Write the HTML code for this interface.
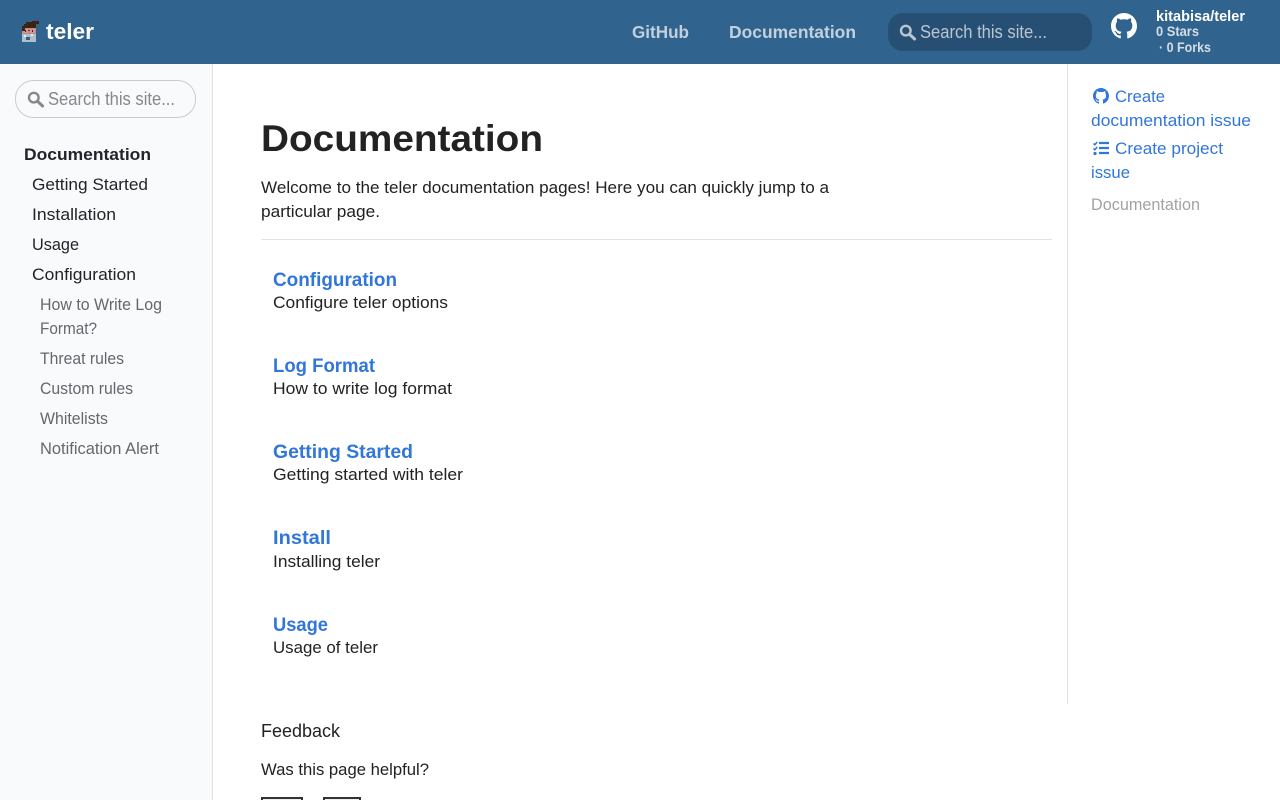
<!DOCTYPE html>
<html lang="en">
<head>
<meta charset="utf-8">
<title>Documentation | teler</title>
<style>
html,body{margin:0;padding:0;width:1280px;height:800px;overflow:hidden;background:#fff}
svg{display:block}
text{font-family:"Liberation Sans",Arial,sans-serif;font-size:16.5px;fill:#222}
.b{font-weight:700}
.nav{font-size:17.5px;font-weight:700;fill:#c3d0dd}
.sb{fill:#212529}
.li{fill:#64686d}
.lk{fill:#3176d9}
.h{font-size:19px;font-weight:700;fill:#3176d9}
</style>
</head>
<body>
<svg width="1280" height="800" viewBox="0 0 1280 800" xmlns="http://www.w3.org/2000/svg">
  <!-- panels -->
  <rect width="1280" height="800" fill="#fff"/>
  <rect x="0" y="64" width="212" height="736" fill="#f9fafc"/>
  <rect x="212" y="64" width="1" height="736" fill="#dee2e6"/>
  <rect x="1067" y="64" width="1" height="640" fill="#dee2e6"/>
  <rect width="1280" height="64" fill="#30638e"/>

  <!-- logo -->
  <g shape-rendering="crispEdges">
    <rect x="22" y="33" width="14" height="9" fill="#a6c2d6"/>
    <rect x="24" y="35" width="2" height="2" fill="#e7edf2"/>
    <rect x="31" y="34" width="2" height="2" fill="#e7edf2"/>
    <rect x="26" y="37" width="4" height="3" fill="#4f5a66"/>
    <rect x="32" y="38" width="2" height="2" fill="#d9b38c"/>
    <rect x="22" y="28" width="14" height="6" fill="#b98f7e"/>
    <rect x="23" y="29" width="5" height="4" fill="#dc8f9f"/>
    <rect x="30" y="29" width="5" height="4" fill="#dc8f9f"/>
    <rect x="25" y="30" width="1" height="2" fill="#2e2e2e"/>
    <rect x="32" y="30" width="1" height="2" fill="#2e2e2e"/>
    <rect x="28" y="30" width="2" height="1" fill="#6b4a3c"/>
    <rect x="24" y="24" width="12" height="4" fill="#3d2314"/>
    <rect x="22" y="26" width="3" height="5" fill="#3d2314"/>
    <rect x="26" y="22" width="10" height="2" fill="#3d2314"/>
    <rect x="32" y="21" width="7" height="3" fill="#3d2314"/>
  </g>
  <text x="46" y="39" class="b" style="font-size:22px;fill:#fff" textLength="48" lengthAdjust="spacingAndGlyphs">teler</text>

  <!-- top nav -->
  <text x="632" y="38" class="nav" textLength="57" lengthAdjust="spacingAndGlyphs">GitHub</text>
  <text x="729" y="38" class="nav" textLength="127" lengthAdjust="spacingAndGlyphs">Documentation</text>

  <!-- top search -->
  <rect x="888" y="13" width="204" height="38" rx="15" fill="#264f73"/>
  <g fill="none" stroke="#b9c6d2">
    <circle cx="905.8" cy="30.6" r="4.8" stroke-width="2.4"/>
    <path d="M909.6 34.4l5 4.6" stroke-width="3" stroke-linecap="round"/>
  </g>
  <text x="920" y="38" style="font-size:18px;fill:#b9c6d2" textLength="127" lengthAdjust="spacingAndGlyphs">Search this site...</text>

  <!-- repo -->
  <svg x="1111" y="13" width="26" height="26" viewBox="0 0 16 16"><path fill="#fff" d="M8 0C3.58 0 0 3.58 0 8c0 3.54 2.29 6.53 5.47 7.59.4.07.55-.17.55-.38 0-.19-.01-.82-.01-1.49-2.01.37-2.53-.49-2.69-.94-.09-.23-.48-.94-.82-1.13-.28-.15-.68-.52-.01-.53.63-.01 1.08.58 1.23.82.72 1.21 1.87.87 2.33.66.07-.52.28-.87.51-1.07-1.78-.2-3.64-.89-3.64-3.95 0-.87.31-1.59.82-2.15-.08-.2-.36-1.02.08-2.12 0 0 .67-.21 2.2.82.64-.18 1.32-.27 2-.27.68 0 1.36.09 2 .27 1.53-1.04 2.2-.82 2.2-.82.44 1.1.16 1.92.08 2.12.51.56.82 1.27.82 2.15 0 3.07-1.87 3.75-3.65 3.95.29.25.54.73.54 1.48 0 1.07-.01 1.93-.01 2.2 0 .21.15.46.55.38A8.013 8.013 0 0016 8c0-4.42-3.58-8-8-8z"/></svg>
  <text x="1156" y="21" class="b" style="font-size:14.5px;fill:#fff" textLength="89" lengthAdjust="spacingAndGlyphs">kitabisa/teler</text>
  <text x="1156" y="36" class="b" style="font-size:14px;fill:#d5dee7" textLength="43" lengthAdjust="spacingAndGlyphs">0 Stars</text>
  <text x="1159" y="52" class="b" style="font-size:14px;fill:#d5dee7" textLength="52" lengthAdjust="spacingAndGlyphs">· 0 Forks</text>

  <!-- sidebar search -->
  <rect x="15.5" y="80.5" width="180" height="37" rx="18" fill="#f9fafc" stroke="#c9cdd2"/>
  <g fill="none" stroke="#85888c">
    <circle cx="33.8" cy="97.6" r="4.8" stroke-width="2.4"/>
    <path d="M37.6 101.4l5 4.6" stroke-width="3" stroke-linecap="round"/>
  </g>
  <text x="48" y="105" style="font-size:18px;fill:#85888c" textLength="127" lengthAdjust="spacingAndGlyphs">Search this site...</text>

  <!-- sidebar nav -->
  <text x="24" y="160" class="b" style="fill:#212529;font-size:17px" textLength="127" lengthAdjust="spacingAndGlyphs">Documentation</text>
  <text x="32" y="190" class="sb" textLength="116" lengthAdjust="spacingAndGlyphs">Getting Started</text>
  <text x="32" y="220" class="sb" textLength="84" lengthAdjust="spacingAndGlyphs">Installation</text>
  <text x="32" y="250" class="sb" textLength="47" lengthAdjust="spacingAndGlyphs">Usage</text>
  <text x="32" y="280" class="sb" textLength="104" lengthAdjust="spacingAndGlyphs">Configuration</text>
  <text x="40" y="310" class="li" textLength="122" lengthAdjust="spacingAndGlyphs">How to Write Log</text>
  <text x="40" y="334" class="li" textLength="57" lengthAdjust="spacingAndGlyphs">Format?</text>
  <text x="40" y="364" class="li" textLength="84" lengthAdjust="spacingAndGlyphs">Threat rules</text>
  <text x="40" y="394" class="li" textLength="93" lengthAdjust="spacingAndGlyphs">Custom rules</text>
  <text x="40" y="424" class="li" textLength="68" lengthAdjust="spacingAndGlyphs">Whitelists</text>
  <text x="40" y="454" class="li" textLength="119" lengthAdjust="spacingAndGlyphs">Notification Alert</text>

  <!-- main -->
  <text x="261" y="151" class="b" style="font-size:37px;fill:#222" textLength="282" lengthAdjust="spacingAndGlyphs">Documentation</text>
  <text x="261" y="193" textLength="568" lengthAdjust="spacingAndGlyphs">Welcome to the teler documentation pages! Here you can quickly jump to a</text>
  <text x="261" y="217" textLength="119" lengthAdjust="spacingAndGlyphs">particular page.</text>
  <rect x="261" y="239" width="791" height="1" fill="#e2e3e4"/>

  <text x="273" y="286" class="h" textLength="124" lengthAdjust="spacingAndGlyphs">Configuration</text>
  <text x="273" y="308" textLength="175" lengthAdjust="spacingAndGlyphs">Configure teler options</text>
  <text x="273" y="372" class="h" textLength="102" lengthAdjust="spacingAndGlyphs">Log Format</text>
  <text x="273" y="394" textLength="179" lengthAdjust="spacingAndGlyphs">How to write log format</text>
  <text x="273" y="458" class="h" textLength="140" lengthAdjust="spacingAndGlyphs">Getting Started</text>
  <text x="273" y="480" textLength="190" lengthAdjust="spacingAndGlyphs">Getting started with teler</text>
  <text x="273" y="544" class="h" textLength="58" lengthAdjust="spacingAndGlyphs">Install</text>
  <text x="273" y="567" textLength="107" lengthAdjust="spacingAndGlyphs">Installing teler</text>
  <text x="273" y="631" class="h" textLength="55" lengthAdjust="spacingAndGlyphs">Usage</text>
  <text x="273" y="653" textLength="105" lengthAdjust="spacingAndGlyphs">Usage of teler</text>

  <text x="261" y="737" style="font-size:18.5px" textLength="79" lengthAdjust="spacingAndGlyphs">Feedback</text>
  <text x="261" y="775" textLength="168" lengthAdjust="spacingAndGlyphs">Was this page helpful?</text>
  <rect x="262" y="798" width="40" height="10" fill="#efefef" stroke="#333" stroke-width="2"/>
  <rect x="324" y="798" width="36" height="10" fill="#efefef" stroke="#333" stroke-width="2"/>

  <!-- right column -->
  <svg x="1093" y="88" width="16" height="16" viewBox="0 0 16 16"><path fill="#3176d9" d="M8 0C3.58 0 0 3.58 0 8c0 3.54 2.29 6.53 5.47 7.59.4.07.55-.17.55-.38 0-.19-.01-.82-.01-1.49-2.01.37-2.53-.49-2.69-.94-.09-.23-.48-.94-.82-1.13-.28-.15-.68-.52-.01-.53.63-.01 1.08.58 1.23.82.72 1.21 1.87.87 2.33.66.07-.52.28-.87.51-1.07-1.78-.2-3.64-.89-3.64-3.95 0-.87.31-1.59.82-2.15-.08-.2-.36-1.02.08-2.12 0 0 .67-.21 2.2.82.64-.18 1.32-.27 2-.27.68 0 1.36.09 2 .27 1.53-1.04 2.2-.82 2.2-.82.44 1.1.16 1.92.08 2.12.51.56.82 1.27.82 2.15 0 3.07-1.87 3.75-3.65 3.95.29.25.54.73.54 1.48 0 1.07-.01 1.93-.01 2.2 0 .21.15.46.55.38A8.013 8.013 0 0016 8c0-4.42-3.58-8-8-8z"/></svg>
  <text x="1115" y="102" class="lk" textLength="50" lengthAdjust="spacingAndGlyphs">Create</text>
  <text x="1091" y="126" class="lk" textLength="160" lengthAdjust="spacingAndGlyphs">documentation issue</text>
  <g fill="none" stroke="#3176d9">
    <path d="M1099 143h10M1099 148h10M1099 153h10" stroke-width="2.2"/>
    <path d="M1093.5 143.5l1.3 1.3 2.4-2.8M1093.5 148.5l1.3 1.3 2.4-2.8" stroke-width="1.5"/>
  </g>
  <circle cx="1095" cy="153.5" r="1.6" fill="#3176d9"/>
  <text x="1115" y="154" class="lk" textLength="108" lengthAdjust="spacingAndGlyphs">Create project</text>
  <text x="1091" y="178" class="lk" textLength="39" lengthAdjust="spacingAndGlyphs">issue</text>
  <text x="1091" y="210" style="fill:#a0a2a4" textLength="109" lengthAdjust="spacingAndGlyphs">Documentation</text>
</svg>
</body>
</html>
